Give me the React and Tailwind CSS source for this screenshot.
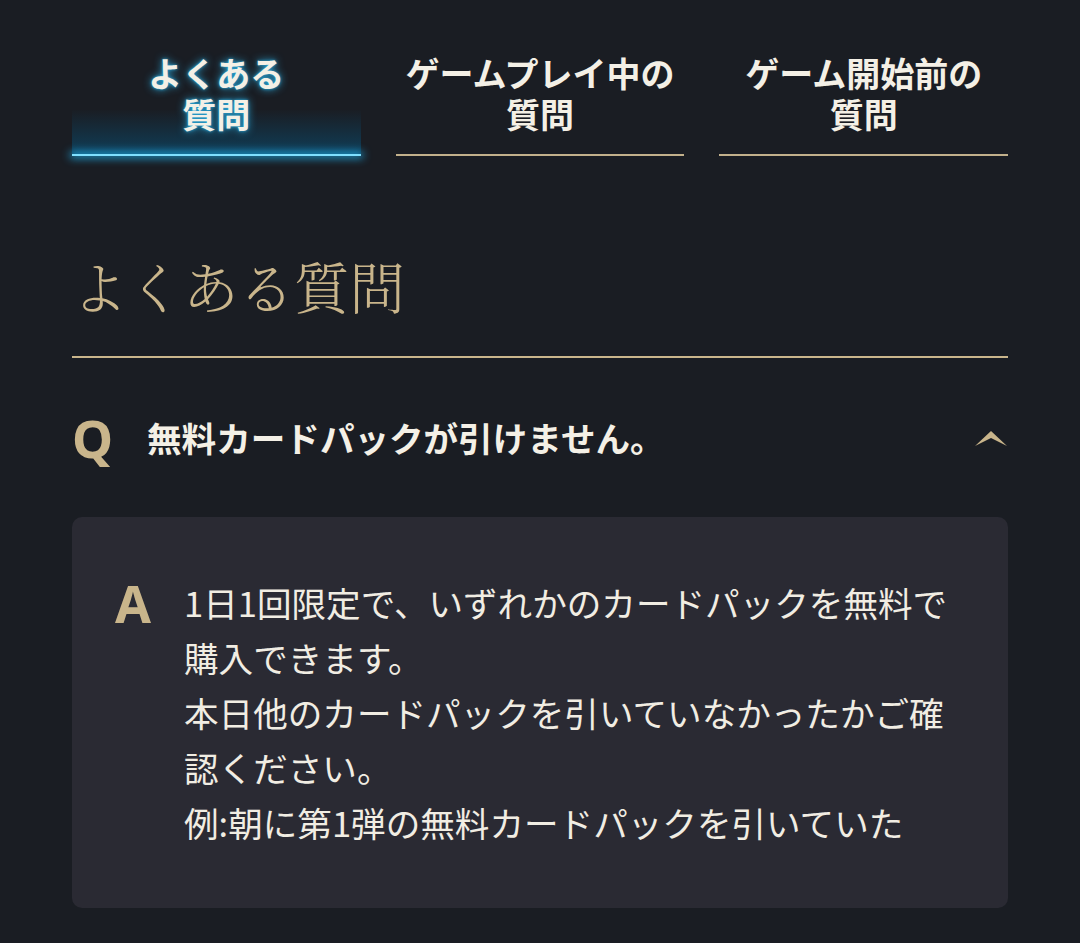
const tabs = [
  { label: ['よくある', '質問'], active: true },
  { label: ['ゲームプレイ中の', '質問'] },
  { label: ['ゲーム開始前の', '質問'] },
]

const answer = [
  '1日1回限定で、いずれかのカードパックを無料で',
  '購入できます。',
  '本日他のカードパックを引いていなかったかご確',
  '認ください。',
  '例:朝に第1弾の無料カードパックを引いていた',
]

function Chevron() {
  return (
    <svg width="34" height="18" viewBox="0 0 34 18" fill="#c9b58b">
      <path d="M1 17 L17 2 L33 17 L17 9 Z" />
    </svg>
  )
}

export default function App() {
  return (
    <div className="min-h-[943px] bg-[#1a1d23] font-['Noto_Sans_CJK_JP','Noto_Sans',sans-serif] text-[#f4f0e6]">
      <div className="mx-[72px] pt-[52px]">
        <nav className="grid grid-cols-3 gap-[35px]">
          {tabs.map((t) => (
            <button
              key={t.label[0]}
              className={
                t.active
                  ? 'relative pb-[22px] text-[34px] font-bold leading-[41px] bg-[linear-gradient(to_bottom,transparent_55%,#0f3f5a)] [text-shadow:0_0_8px_#2aa9dc,0_0_3px_#2aa9dc]'
                  : 'relative pb-[22px] text-[34px] font-bold leading-[41px]'
              }
            >
              {t.label[0]}
              <br />
              {t.label[1]}
              <span
                className={
                  t.active
                    ? 'absolute left-0 right-0 bottom-0 h-[2px] bg-[#7fe0ff] shadow-[0_0_8px_2px_#1ea6de]'
                    : 'absolute left-0 right-0 bottom-0 h-[2px] bg-[#c2b08b]'
                }
              />
            </button>
          ))}
        </nav>

        <h1 className="mt-[87px] pb-[29px] border-b-2 border-[#c9b58b] text-[55.5px] leading-[84px] font-light text-[#c9b58b] font-['Noto_Serif_CJK_JP','Noto_Sans_CJK_JP',serif]">
          よくある質問
        </h1>

        <div className="flex h-[159px] items-center">
          <span className="w-[75px] text-[52px] font-bold leading-none text-[#c9b58b] font-['Noto_Sans',sans-serif]">Q</span>
          <span className="text-[34.6px] font-bold">無料カードパックが引けません。</span>
          <span className="ml-auto">
            <Chevron />
          </span>
        </div>

        <div className="flex rounded-[10px] bg-[#2a2a33] pl-[43px] pr-[40px] py-[58px]">
          <span className="w-[69px] shrink-0 text-[52px] font-bold leading-[55px] text-[#c9b58b] font-['Noto_Sans',sans-serif]">A</span>
          <p className="text-[34.6px] leading-[55px] text-[#f1ede3]">
            {answer.map((line) => (
              <span key={line} className="block whitespace-nowrap">{line}</span>
            ))}
          </p>
        </div>
      </div>
    </div>
  )
}
